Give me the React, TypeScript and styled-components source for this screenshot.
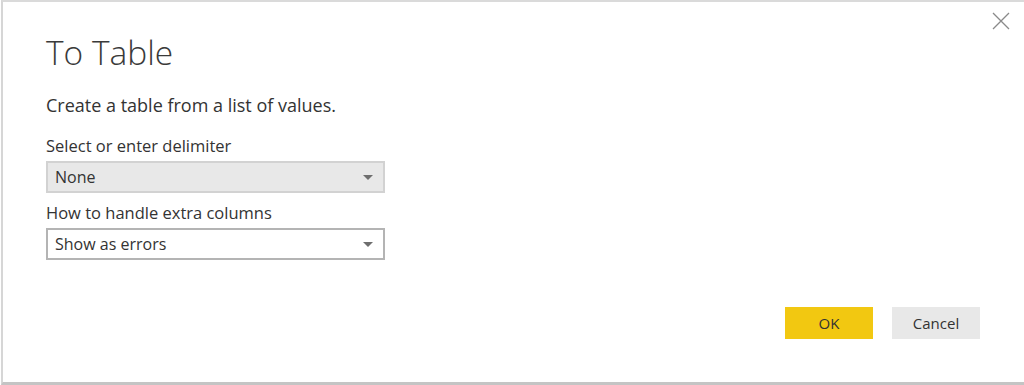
import React from 'react';
import styled, { createGlobalStyle } from 'styled-components';

const GlobalStyle = createGlobalStyle`
    html, body {
        margin: 0;
        padding: 0;
        background: #ffffff;
    }
    body {
        font-family: "Open Sans", "Segoe UI", "Liberation Sans", sans-serif;
        color: #333333;
    }
`;

const Frame = styled.div`
    box-sizing: border-box;
    position: relative;
    height: 385px;
    width: 1024px;
    margin-left: 1px;
    border-top: 2px solid #dadada;
    border-left: 2px solid #d6d6d6;
    border-bottom: 3px solid #c4c4c4;
    display: flex;
    flex-direction: column;
    padding: 0 45px 0 43px;
`;

const CloseButton = styled.button`
    position: absolute;
    top: 9px;
    right: 14px;
    width: 20px;
    height: 20px;
    padding: 0;
    border: none;
    background: transparent;
    display: flex;
    align-items: center;
    justify-content: center;
`;

const Title = styled.h1`
    margin: 26px 0 0;
    font-size: 33.5px;
    font-weight: 300;
    line-height: 48px;
    color: #3a3a3a;
`;

const Subtitle = styled.p`
    margin: 17px 0 0;
    font-size: 18px;
    line-height: 24px;
    color: #333333;
`;

const Field = styled.div<{ $top: number }>`
    display: flex;
    flex-direction: column;
    margin-top: ${(p) => p.$top}px;
`;

const Label = styled.label`
    font-size: 16.5px;
    line-height: 22px;
    color: #333333;
`;

const Select = styled.div<{ $filled?: boolean }>`
    box-sizing: border-box;
    width: 339px;
    height: 32px;
    margin-top: 4px;
    display: flex;
    align-items: center;
    justify-content: space-between;
    padding: 0 10px 0 7px;
    font-size: 16px;
    color: #333333;
    background: ${(p) => (p.$filled ? '#e8e8e8' : '#ffffff')};
    border: 2px solid ${(p) => (p.$filled ? '#d2d2d2' : '#b4b4b4')};
`;

const Caret = styled.span`
    width: 0;
    height: 0;
    border-left: 5px solid transparent;
    border-right: 5px solid transparent;
    border-top: 5px solid #6e6e6e;
`;

const Footer = styled.div`
    margin-top: auto;
    margin-bottom: 43px;
    display: flex;
    justify-content: flex-end;
    gap: 19px;
`;

const Button = styled.button<{ $primary?: boolean }>`
    width: 88px;
    height: 32px;
    border: none;
    font-family: "Open Sans", "Segoe UI", "Liberation Sans", sans-serif;
    font-size: 15px;
    color: #333333;
    background: ${(p) => (p.$primary ? '#f2c811' : '#e8e8e8')};
`;

const App: React.FC = () => {
    return (
        <>
            <GlobalStyle />
            <Frame>
                <CloseButton aria-label="Close">
                    <svg width="18" height="18" viewBox="0 0 18 18">
                        <path d="M1 1 L17 17 M17 1 L1 17" stroke="#8a8a8a" strokeWidth="1.3" />
                    </svg>
                </CloseButton>
                <Title>To Table</Title>
                <Subtitle>Create a table from a list of values.</Subtitle>
                <Field $top={18}>
                    <Label>Select or enter delimiter</Label>
                    <Select $filled>
                        <span>None</span>
                        <Caret />
                    </Select>
                </Field>
                <Field $top={9}>
                    <Label>How to handle extra columns</Label>
                    <Select>
                        <span>Show as errors</span>
                        <Caret />
                    </Select>
                </Field>
                <Footer>
                    <Button $primary>OK</Button>
                    <Button>Cancel</Button>
                </Footer>
            </Frame>
        </>
    );
};

export default App;
